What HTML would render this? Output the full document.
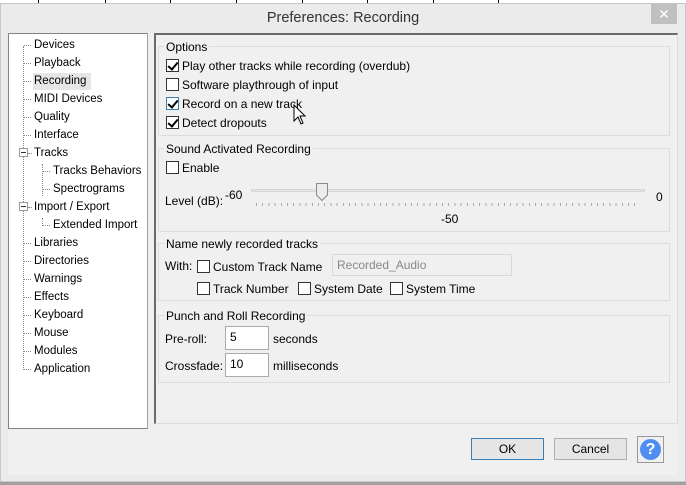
<!DOCTYPE html>
<html><head><style>
*{margin:0;padding:0;box-sizing:border-box}
body{width:686px;height:485px;background:#f0f0f0;font-family:"Liberation Sans",sans-serif;font-size:12px;color:#000;position:relative;overflow:hidden}
.a{position:absolute;white-space:nowrap}
.t{margin-top:1px}
.cb{position:absolute;width:13px;height:13px;border:1px solid #333;background:#fff}
.cb.c::after{content:"";position:absolute;left:3px;top:0px;width:4px;height:8px;border:solid #000;border-width:0 2px 2px 0;transform:rotate(40deg)}
.grp{position:absolute;border:1px solid #dcdcdc;}
.gt{position:absolute;background:#f0f0f0;padding:0 2px}
.tree .a{font-size:11.5px;margin-top:1px}
.dot{position:absolute;border-top:1px dotted #888;width:7px}
.vdot{position:absolute;border-left:1px dotted #888}
.inp{position:absolute;background:#fff;border:1px solid #aaa;padding:3px 4px}
.btn{position:absolute;border:1px solid #adadad;background:#e5e5e5;text-align:center;line-height:20px}
</style></head><body>
<div class="a" style="left:0;top:0;width:686px;height:8px;background:#fff"></div>
<div class="a" style="left:38px;top:0;width:1px;height:3px;background:#000"></div>
<div class="a" style="left:105px;top:0;width:1px;height:3px;background:#000"></div>
<div class="a" style="left:170px;top:0;width:1px;height:3px;background:#000"></div>
<div class="a" style="left:236px;top:0;width:1px;height:3px;background:#000"></div>
<div class="a" style="left:302px;top:0;width:1px;height:3px;background:#000"></div>
<div class="a" style="left:367px;top:0;width:1px;height:3px;background:#000"></div>
<div class="a" style="left:433px;top:0;width:1px;height:3px;background:#000"></div>
<div class="a" style="left:498px;top:0;width:1px;height:3px;background:#000"></div>
<div class="a" style="left:0;top:3px;width:686px;height:479px;background:#ebebeb;border:1px solid #c8c8c8"></div>
<div class="a" style="left:8px;top:33px;width:670px;height:442px;background:#f0f0f0"></div>
<div class="a" style="left:0;top:6px;width:686px;text-align:center;font-size:14.5px;color:#333;line-height:24px">Preferences: Recording</div>
<div class="a" style="left:651px;top:4px;width:26px;height:20px;background:#c0c0c0;color:#fff;text-align:center;font-size:14px;line-height:20px">✕</div>
<div class="a" style="left:0;top:482px;width:686px;height:3px;background:#a0a0a0"></div>

<div class="a tree" style="left:8px;top:33px;width:140px;height:396px;background:#fff;border:1px solid #828282;border-right-color:#a0a0a0">
<div class="vdot" style="left:14px;top:12px;height:324px"></div>
<div class="vdot" style="left:33px;top:130px;height:32px"></div>
<div class="vdot" style="left:33px;top:184px;height:8px"></div>
<div class="dot" style="left:15px;top:11px"></div><div class="a" style="left:25px;top:4px">Devices</div>
<div class="dot" style="left:15px;top:29px"></div><div class="a" style="left:25px;top:22px">Playback</div>
<div class="a" style="left:24px;top:39px;width:58px;height:17px;background:#e6e6e6;margin:0"></div>
<div class="dot" style="left:15px;top:47px"></div><div class="a" style="left:25px;top:40px">Recording</div>
<div class="dot" style="left:15px;top:65px"></div><div class="a" style="left:25px;top:58px">MIDI Devices</div>
<div class="dot" style="left:15px;top:83px"></div><div class="a" style="left:25px;top:76px">Quality</div>
<div class="dot" style="left:15px;top:101px"></div><div class="a" style="left:25px;top:94px">Interface</div>
<div class="a" style="left:10px;top:114px;width:9px;height:9px;border:1px solid #999;background:#fff;margin:0"><div style="position:absolute;left:1px;top:3px;width:5px;height:1px;background:#333"></div></div>
<div class="dot" style="left:19px;top:119px;width:4px"></div><div class="a" style="left:25px;top:112px">Tracks</div>
<div class="dot" style="left:34px;top:137px"></div><div class="a" style="left:44px;top:130px">Tracks Behaviors</div>
<div class="dot" style="left:34px;top:155px"></div><div class="a" style="left:44px;top:148px">Spectrograms</div>
<div class="a" style="left:10px;top:168px;width:9px;height:9px;border:1px solid #999;background:#fff;margin:0"><div style="position:absolute;left:1px;top:3px;width:5px;height:1px;background:#333"></div></div>
<div class="dot" style="left:19px;top:173px;width:4px"></div><div class="a" style="left:25px;top:166px">Import / Export</div>
<div class="dot" style="left:34px;top:191px"></div><div class="a" style="left:44px;top:184px">Extended Import</div>
<div class="dot" style="left:15px;top:209px"></div><div class="a" style="left:25px;top:202px">Libraries</div>
<div class="dot" style="left:15px;top:227px"></div><div class="a" style="left:25px;top:220px">Directories</div>
<div class="dot" style="left:15px;top:245px"></div><div class="a" style="left:25px;top:238px">Warnings</div>
<div class="dot" style="left:15px;top:263px"></div><div class="a" style="left:25px;top:256px">Effects</div>
<div class="dot" style="left:15px;top:281px"></div><div class="a" style="left:25px;top:274px">Keyboard</div>
<div class="dot" style="left:15px;top:299px"></div><div class="a" style="left:25px;top:292px">Mouse</div>
<div class="dot" style="left:15px;top:317px"></div><div class="a" style="left:25px;top:310px">Modules</div>
<div class="dot" style="left:15px;top:335px"></div><div class="a" style="left:25px;top:328px">Application</div>
</div>

<div class="a" style="left:154px;top:33px;width:524px;height:391px;border:1px solid #dcdcdc;border-left:2px solid #6a6a6a;border-top:2px solid #6a6a6a"></div>

<div class="grp" style="left:158px;top:46px;width:512px;height:90px"></div>
<div class="gt a t" style="left:164px;top:39px">Options</div>
<div class="cb c" style="left:166px;top:59px"></div><div class="a t" style="left:182px;top:58px">Play other tracks while recording (overdub)</div>
<div class="cb" style="left:166px;top:78px"></div><div class="a t" style="left:182px;top:77px">Software playthrough of input</div>
<div class="cb c" style="left:166px;top:97px;border-color:#3c7fb1"></div><div class="a t" style="left:182px;top:96px">Record on a new track</div>
<div class="cb c" style="left:166px;top:116px"></div><div class="a t" style="left:182px;top:115px">Detect dropouts</div>
<svg class="a" style="left:293px;top:104px" width="14" height="22" viewBox="0 0 14 22"><path d="M1 1 L1 17 L5 13 L8 20 L10 19 L7 12 L12 12 Z" fill="#fff" stroke="#000" stroke-width="1"/></svg>

<div class="grp" style="left:158px;top:148px;width:512px;height:84px"></div>
<div class="gt a t" style="left:164px;top:141px">Sound Activated Recording</div>
<div class="cb" style="left:166px;top:161px"></div><div class="a t" style="left:182px;top:160px">Enable</div>
<div class="a t" style="left:165px;top:193px">Level (dB):</div>
<div class="a t" style="left:225px;top:187px">-60</div>
<div class="a t" style="left:656px;top:189px">0</div>
<div class="a" style="left:251px;top:189px;width:394px;height:3px;background:#e7e7e7;border:1px solid #d6d6d6"></div>
<svg class="a" style="left:315px;top:182px" width="14" height="20"><path d="M1.5 1.5 H12.5 V13 L7 18.5 L1.5 13 Z" fill="#ececec" stroke="#8a8a8a"/></svg>
<div class="a" style="left:256px;top:203px;width:382px;height:3px;background:repeating-linear-gradient(90deg,#aaa 0 1px,transparent 1px 6.2px)"></div>
<div class="a t" style="left:441px;top:211px">-50</div>

<div class="grp" style="left:158px;top:243px;width:512px;height:58px"></div>
<div class="gt a t" style="left:164px;top:236px">Name newly recorded tracks</div>
<div class="a t" style="left:165px;top:258px">With:</div>
<div class="cb" style="left:197px;top:260px"></div><div class="a t" style="left:213px;top:259px">Custom Track Name</div>
<div class="inp" style="left:332px;top:254px;width:180px;height:22px;background:#f0f0f0;border-color:#d9d9d9;color:#888">Recorded_Audio</div>
<div class="cb" style="left:197px;top:282px"></div><div class="a t" style="left:213px;top:281px">Track Number</div>
<div class="cb" style="left:298px;top:282px"></div><div class="a t" style="left:314px;top:281px">System Date</div>
<div class="cb" style="left:390px;top:282px"></div><div class="a t" style="left:406px;top:281px">System Time</div>

<div class="grp" style="left:158px;top:315px;width:512px;height:68px"></div>
<div class="gt a t" style="left:164px;top:308px">Punch and Roll Recording</div>
<div class="a t" style="left:165px;top:331px">Pre-roll:</div>
<div class="inp" style="left:225px;top:326px;width:44px;height:24px">5</div>
<div class="a t" style="left:273px;top:331px">seconds</div>
<div class="a t" style="left:165px;top:358px">Crossfade:</div>
<div class="inp" style="left:225px;top:353px;width:44px;height:24px">10</div>
<div class="a t" style="left:273px;top:358px">milliseconds</div>

<div class="btn" style="left:471px;top:438px;width:73px;height:22px;border-color:#3c7fb1">OK</div>
<div class="btn" style="left:554px;top:438px;width:73px;height:22px">Cancel</div>
<div class="a" style="left:637px;top:436px;width:27px;height:27px;border:1px solid #999;background:#f0f0f0"><div style="position:absolute;left:2px;top:2px;width:21px;height:21px;border-radius:50%;background:#4f8ef0;color:#fff;font-weight:bold;font-size:16px;text-align:center;line-height:21px">?</div></div>
</body></html>
